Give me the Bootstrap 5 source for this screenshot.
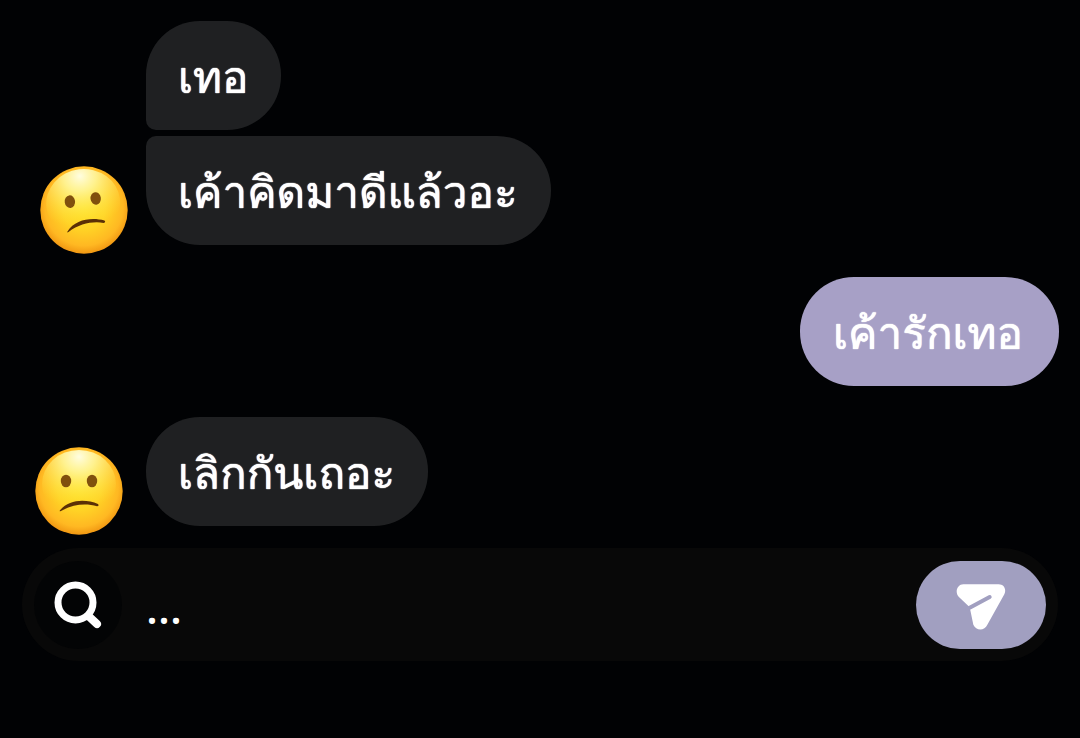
<!DOCTYPE html>
<html lang="th">
<head>
<meta charset="utf-8">
<meta name="viewport" content="width=device-width, initial-scale=1">
<title>แชท</title>
<link href="https://cdn.jsdelivr.net/npm/bootstrap@5.3.0/dist/css/bootstrap.min.css" rel="stylesheet">
<style>
  body { background: #010204; color: #fff; font-family: Loma, "Noto Sans", sans-serif; }
  .chat { padding: 21px 21px 13px 0; }
  .avatar-col { width: 146px; flex: none; padding-left: 40px; }
  .avatar-col.near { padding-left: 35px; }
  .face { width: 88px; height: 88px; display: block; }
  .bubble { height: 109px; padding: 2px 33px 0 32px; border-radius: 54px; background: #1f2022; font-size: 44px; line-height: 60px; text-shadow: 0 0 1px #fff, 0 0 1px #fff; white-space: nowrap; }
  .bubble.first { border-bottom-left-radius: 10px; }
  .bubble.last { border-top-left-radius: 10px; }
  .bubble.mine { padding: 2px 36px 0 33px; background: #a7a0c6; }
  .thread { gap: 6px; margin-bottom: 9px; }
  .from-me { margin: 23px 0 31px; }
  .composer { margin: 0 22px; height: 113px; padding: 0 12px; background: #080808; }
  .search { width: 88px; height: 88px; background: #030405; }
  .message { color: #fff; font-family: "Noto Sans", Loma, sans-serif; font-weight: 500; font-size: 44px; line-height: 60px; padding: 4px 0 0 24px; min-width: 0; }
  .message:focus { outline: 0; }
  .send { width: 130px; height: 88px; background: #a19fc0; }
</style>
</head>
<body>
<svg width="0" height="0" class="position-absolute" aria-hidden="true">
  <defs>
    <radialGradient id="skin" cx=".5" cy=".46" r=".56">
      <stop offset="0" stop-color="#ffe11f"/><stop offset=".45" stop-color="#ffd426"/>
      <stop offset=".8" stop-color="#ffb822"/><stop offset="1" stop-color="#ee900f"/>
    </radialGradient>
    <radialGradient id="shine" cx=".5" cy=".1" r=".75">
      <stop offset="0" stop-color="#fffde0"/><stop offset=".3" stop-color="#fff8a0" stop-opacity=".85"/><stop offset="1" stop-color="#ffe63c" stop-opacity="0"/>
    </radialGradient>
    <symbol id="confused" viewBox="0 0 88 88">
      <ellipse cx="44" cy="37" rx="37" ry="34" fill="url(#shine)"/>
      <ellipse cx="31" cy="34" rx="5.2" ry="6.3" fill="#80500d"/>
      <ellipse cx="57" cy="34" rx="5.2" ry="6.3" fill="#80500d"/>
      <path d="M24.800 63.500C34 52 51 52 63 57Q64.500 59 62 59.200C51 56 38 57 26 64Q24.300 64.800 24.800 63.500Z" fill="#5b3006"/>
    </symbol>
  </defs>
</svg>

<main class="chat d-flex flex-column">
  <div class="d-flex align-items-end">
    <div class="avatar-col">
      <svg class="face" viewBox="0 0 88 88" role="img" aria-label="😕"><circle cx="44" cy="44" r="43.700" fill="url(#skin)"/><use href="#confused" transform="rotate(-7 44 44)"/></svg>
    </div>
    <div class="thread d-flex flex-column align-items-start">
      <div class="bubble first d-flex align-items-center">เทอ</div>
      <div class="bubble last d-flex align-items-center">เค้าคิดมาดีแล้วอะ</div>
    </div>
  </div>
  <div class="from-me d-flex justify-content-end">
    <div class="bubble mine d-flex align-items-center">เค้ารักเทอ</div>
  </div>
  <div class="d-flex align-items-end">
    <div class="avatar-col near">
      <svg class="face" viewBox="0 0 88 88" role="img" aria-label="😕"><circle cx="44" cy="44" r="43.700" fill="url(#skin)"/><use href="#confused"/></svg>
    </div>
    <div class="thread d-flex flex-column align-items-start">
      <div class="bubble d-flex align-items-center">เลิกกันเถอะ</div>
    </div>
  </div>
</main>

<form class="composer d-flex align-items-center rounded-pill" onsubmit="return false">
  <button type="button" class="search btn border-0 rounded-circle p-0 flex-shrink-0 d-flex align-items-center justify-content-center" aria-label="ค้นหา">
    <svg width="48" height="48" viewBox="0 0 48 48" fill="none" stroke="#fff" stroke-linecap="round"><circle cx="21.500" cy="21.500" r="17.500" stroke-width="7"/><path d="M35 35.500L43 43" stroke-width="8"/></svg>
  </button>
  <input class="message flex-grow-1 bg-transparent border-0" type="text" value="..." aria-label="ข้อความ">
  <button type="submit" class="send btn border-0 rounded-pill p-0 flex-shrink-0 d-flex align-items-center justify-content-center" aria-label="ส่ง">
    <svg width="50" height="52" viewBox="-2 -16 150 156"><path d="M20 0H126C142 0 150 15 143 30L92 121C84 140 58 140 50 121L41 78L36 66L6 37C-7 22 3 0 20 0Z" fill="#fff"/><path d="M32 74L99 38" stroke="#a19fc0" stroke-width="12" stroke-linecap="round"/></svg>
  </button>
</form>
<script src="https://cdn.jsdelivr.net/npm/bootstrap@5.3.0/dist/js/bootstrap.bundle.min.js"></script>
</body>
</html>
